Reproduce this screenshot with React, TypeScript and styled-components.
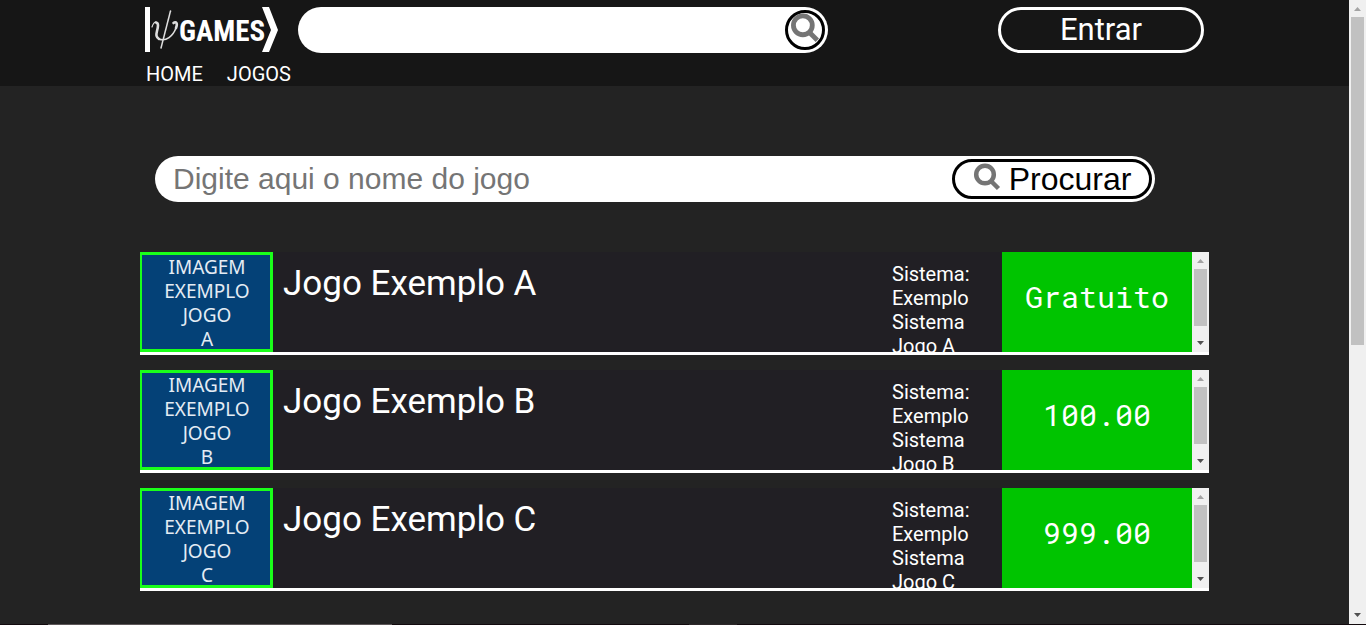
import React from "react";
import styled, { createGlobalStyle } from "styled-components";

const GlobalStyle = createGlobalStyle`
  *, *::before, *::after { box-sizing: border-box; }
  body {
    margin: 0;
    background: #232323;
    color: #fff;
    font-family: Roboto, "Liberation Sans", sans-serif;
  }
  h2, p, ul { margin: 0; padding: 0; font-weight: 400; }
`;

const Screen = styled.div`
  display: flex;
  flex-direction: column;
  height: 100vh;
  overflow: hidden;
`;

const Viewport = styled.div`
  display: flex;
  flex: 1;
  min-height: 0;
`;

const Page = styled.div`
  flex: 1;
  min-width: 0;
  overflow: hidden;
`;

const Header = styled.header`
  background: #161616;
  height: 86px;
  padding-top: 7px;
`;

const Container = styled.div`
  width: 80%;
  max-width: 1069px;
  margin: 0 auto;

  @media (max-width: 1366px) {
    width: calc(100% - 280px);
  }
`;

const TopBar = styled.div`
  display: flex;
  align-items: center;
  padding: 0 5px;
`;

const LogoLink = styled.a`
  display: block;
  width: 133px;
  height: 46px;
  margin-right: 20px;
`;

const SearchForm = styled.form<{ $wide?: boolean }>`
  display: flex;
  align-items: center;
  flex: 0 1 ${(p) => (p.$wide ? "1000px" : "530px")};
  height: 46px;
  padding: 3px;
  background: #fff;
  border-radius: 23px;
`;

const SearchInput = styled.input`
  flex: 1;
  min-width: 0;
  height: 40px;
  padding: 0 15px;
  border: 0;
  outline: 0;
  background: transparent;
  font: 30px "Liberation Sans", Arial, sans-serif;
  color: #000;

  &::placeholder { color: #757575; opacity: 1; }
`;

const SearchButton = styled.button<{ $round?: boolean }>`
  display: flex;
  align-items: center;
  justify-content: center;
  gap: 8px;
  width: ${(p) => (p.$round ? "40px" : "200px")};
  height: 40px;
  padding: 0;
  border: 3px solid #000;
  border-radius: 20px;
  background: #fff;
  color: #000;
  font: 32px "Liberation Sans", Arial, sans-serif;

  svg { margin-bottom: 4px; }
`;

const LoginButton = styled.button`
  width: 206px;
  height: 46px;
  margin-left: auto;
  padding: 0 0 2px;
  border: 3px solid #fff;
  border-radius: 23px;
  background: transparent;
  color: #fff;
  font: 31px Roboto, sans-serif;
`;

const Nav = styled.nav`
  display: flex;
  gap: 24px;
  padding: 9px 6px 0;
`;

const NavLink = styled.a`
  color: #fff;
  font-size: 20px;
  line-height: 24px;
  text-decoration: none;
`;

const SearchSection = styled.section`
  display: flex;
  padding: 70px 15px 50px;
`;

const GameList = styled.ul`
  display: flex;
  flex-direction: column;
  gap: 15px;
  list-style: none;
`;

const GameCard = styled.li`
  display: flex;
  height: 103px;
  border-bottom: 3px solid #fff;
  background: #211f24;
  overflow: hidden;
`;

const Cover = styled.div`
  width: 133px;
  padding-left: 2px;
  border: 3px solid #1aff1a;
  border-left-width: 2px;
  background: #044177;
  color: #e4ecf4;
  font: 19px/24px "Noto Sans", sans-serif;
  text-align: center;
  white-space: pre-line;
`;

const GameTitle = styled.h2`
  flex: 1;
  padding: 11px 10px 0;
  font-size: 35px;
  line-height: 42px;
`;

const GameSystem = styled.p`
  width: 110px;
  padding: 10px 25px 0 0;
  font-size: 20px;
  line-height: 24px;
`;

const Price = styled.div`
  width: 190px;
  padding-top: 25px;
  background: #00c400;
  font: 30px/40px "Roboto Mono", "Liberation Mono", monospace;
  text-align: center;
`;

const Track = styled.div`
  display: flex;
  flex-direction: column;
  align-items: center;
  flex: 0 0 17px;
  background: #f0f0f0;
`;

const Arrow = styled.svg`
  display: block;
  width: 17px;
  height: 17px;
  flex: none;
`;

const ThumbArea = styled.div`
  flex: 1;
  width: 13px;
`;

const Thumb = styled.div<{ $size: string }>`
  height: ${(p) => p.$size};
  background: #c1c1c1;
`;

const BottomEdge = styled.div`
  height: 1px;
  background: linear-gradient(
    to right,
    #120a0e 48px,
    #5c5658 48px 392px,
    #120a0e 392px 689px,
    #2d2729 689px 737px,
    #120a0e 737px
  );
`;

function ScrollTrack({ size }: { size: string }) {
  return (
    <Track aria-hidden="true">
      <Arrow viewBox="0 0 17 17">
        <path d="M5 11 8.500 7 12 11Z" fill="#a3a3a3" />
      </Arrow>
      <ThumbArea>
        <Thumb $size={size} />
      </ThumbArea>
      <Arrow viewBox="0 0 17 17">
        <path d="M5 6 8.500 10 12 6Z" fill="#505050" />
      </Arrow>
    </Track>
  );
}

function Magnifier({ size }: { size: number }) {
  return (
    <svg width={size} height={size} viewBox="0 0 28 28" fill="none" stroke="#757575" aria-hidden="true">
      <circle cx="12" cy="11.500" r="8.800" strokeWidth="4.500" />
      <path d="M18 18 25.500 25.500" strokeWidth="4.500" />
    </svg>
  );
}

function Logo() {
  return (
    <svg width="133" height="46" viewBox="0 0 133 46" fill="#fff" role="img" aria-label="Games">
      <rect x="0" y="0" width="5" height="45" />
      <g fill="none" stroke="#ddd" strokeLinecap="round">
        <path d="M7 20C8 17 9 15 11 15" strokeWidth="1.200" />
        <path d="M11 15.500C14 16 13 20 12 24C11 28 11 30 14 32" strokeWidth="2.600" />
        <path d="M14 32C21 35 28 29 31 21" strokeWidth="1.600" />
        <path d="M28.500 16C31 14 33 16 31 21" strokeWidth="2.600" />
        <path d="M25.500 4 16 41" strokeWidth="1.500" />
      </g>
      <text x="34" y="34" fontFamily="'Roboto Condensed', 'Liberation Sans Narrow', 'Liberation Sans', sans-serif" fontWeight="700" fontSize="29">
        GAMES
      </text>
      <path d="M117 0H124L133 23 124 45H117L126 23Z" />
    </svg>
  );
}

const games = [
  { id: "A", price: "Gratuito" },
  { id: "B", price: "100.00" },
  { id: "C", price: "999.00" },
];

export default function App() {
  return (
    <Screen>
      <GlobalStyle />
      <Viewport>
        <Page>
          <Header>
            <Container>
              <TopBar>
                <LogoLink href="#home"><Logo /></LogoLink>
                <SearchForm role="search" onSubmit={(e) => e.preventDefault()}>
                  <SearchInput type="text" aria-label="Pesquisar" />
                  <SearchButton $round aria-label="Pesquisar"><Magnifier size={30} /></SearchButton>
                </SearchForm>
                <LoginButton type="button">Entrar</LoginButton>
              </TopBar>
              <Nav>
                <NavLink href="#home">HOME</NavLink>
                <NavLink href="#jogos">JOGOS</NavLink>
              </Nav>
            </Container>
          </Header>
          <Container as="main">
            <SearchSection>
              <SearchForm $wide role="search" onSubmit={(e) => e.preventDefault()}>
                <SearchInput type="text" aria-label="Nome do jogo" placeholder="Digite aqui o nome do jogo" />
                <SearchButton><Magnifier size={28} />Procurar</SearchButton>
              </SearchForm>
            </SearchSection>
            <GameList>
              {games.map((g) => (
                <GameCard key={g.id}>
                  <Cover>{`IMAGEM\nEXEMPLO\nJOGO\n${g.id}`}</Cover>
                  <GameTitle>Jogo Exemplo {g.id}</GameTitle>
                  <GameSystem>Sistema: Exemplo Sistema Jogo {g.id}</GameSystem>
                  <Price>{g.price}</Price>
                  <ScrollTrack size="57px" />
                </GameCard>
              ))}
            </GameList>
          </Container>
        </Page>
        <ScrollTrack size="calc((100vh - 35px) * 5 / 9)" />
      </Viewport>
      <BottomEdge />
    </Screen>
  );
}
